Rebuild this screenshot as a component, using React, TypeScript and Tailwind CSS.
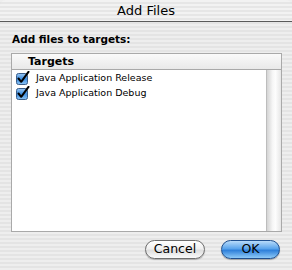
import React from "react";

function Check() {
  return (
    <svg width="14" height="14" viewBox="0 0 14 14" className="shrink-0">
      <defs>
        <linearGradient id="cbg" x1="0" y1="0" x2="0" y2="1">
          <stop offset="0" stopColor="#9cc8f3" />
          <stop offset="0.5" stopColor="#3d8de0" />
          <stop offset="1" stopColor="#8cc4f5" />
        </linearGradient>
      </defs>
      <rect x="0.5" y="2.5" width="11" height="11" rx="2" fill="url(#cbg)" stroke="#3b5e8a" />
      <path d="M2.5 7.5 L5.2 10.8 L12.5 0.8" fill="none" stroke="#000" strokeWidth="2" strokeLinecap="round" strokeLinejoin="round" />
    </svg>
  );
}

export default function App() {
  return (
    <div
      className="w-[292px] h-[270px] flex flex-col overflow-hidden bg-[repeating-linear-gradient(to_bottom,#eeeeee_0px,#eeeeee_2px,#e4e4e4_2px,#e4e4e4_4px)] text-black"
      style={{ fontFamily: '"DejaVu Sans", "Liberation Sans", sans-serif' }}
    >
      <div className="h-[22px] shrink-0 flex items-center justify-center border-b border-[#5a5a5a] rounded-t-[6px] text-[13px] leading-none bg-[repeating-linear-gradient(to_bottom,#f2f2f2_0px,#f2f2f2_2px,#e6e6e6_2px,#e6e6e6_4px)]">
        Add Files
      </div>
      <div className="px-[11px] pt-[11px] flex flex-col">
        <div className="text-[10.5px] font-bold leading-[13px] pl-[1px]">Add files to targets:</div>
        <div className="mt-[7px] w-[271px] h-[179px] border border-[#a9a9a9] bg-white flex flex-col">
          <div className="h-[16px] shrink-0 border-b border-[#a9a9a9] bg-[linear-gradient(to_bottom,#fafafa,#e9e9e9)] flex items-center pl-[16px] text-[11px] font-bold leading-none">
            Targets
          </div>
          <div className="flex-1 flex">
            <div className="flex-1 flex flex-col pl-[4px]">
              <div className="h-[15px] flex items-center gap-[6px]">
                <Check />
                <span className="text-[9.5px] leading-none">Java Application Release</span>
              </div>
              <div className="h-[15px] flex items-center gap-[6px]">
                <Check />
                <span className="text-[9.5px] leading-none">Java Application Debug</span>
              </div>
            </div>
            <div className="w-[15px] bg-[linear-gradient(to_right,#d4d4d4,#f6f6f6_40%,#fdfdfd_60%,#e6e6e6)] border-l border-[#bdbdbd]" />
          </div>
        </div>
        <div className="mt-[8px] flex justify-end gap-[16px] pr-[1px]">
          <div className="w-[60px] h-[19px] rounded-full border border-[#6e6e6e] bg-[linear-gradient(to_bottom,#ffffff,#f0f0f0_45%,#dedede_55%,#fafafa)] flex items-center justify-center text-[12.5px] leading-none shadow-[0_1px_1px_rgba(0,0,0,0.25)]">
            Cancel
          </div>
          <div className="w-[59px] h-[19px] rounded-full border border-[#1e4f8f] bg-[linear-gradient(to_bottom,#b8dbfa,#5aa4ec_45%,#2f80da_55%,#8ecaf8)] flex items-center justify-center text-[12.5px] leading-none shadow-[0_1px_1px_rgba(0,0,0,0.3)]">
            OK
          </div>
        </div>
      </div>
    </div>
  );
}
